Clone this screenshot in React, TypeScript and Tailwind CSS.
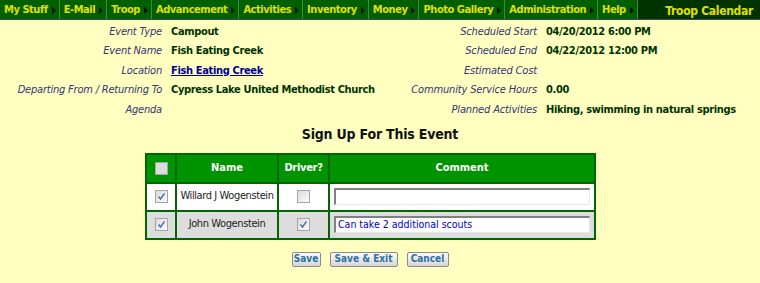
const menu = [
  'My Stuff',
  'E-Mail',
  'Troop',
  'Advancement',
  'Activities',
  'Inventory',
  'Money',
  'Photo Gallery',
  'Administration',
  'Help',
];

const leftRows: [string, string, boolean?][] = [
  ['Event Type', 'Campout'],
  ['Event Name', 'Fish Eating Creek'],
  ['Location', 'Fish Eating Creek', true],
  ['Departing From / Returning To', 'Cypress Lake United Methodist Church'],
  ['Agenda', ''],
];

const rightRows: [string, string][] = [
  ['Scheduled Start', '04/20/2012 6:00 PM'],
  ['Scheduled End', '04/22/2012 12:00 PM'],
  ['Estimated Cost', ''],
  ['Community Service Hours', '0.00'],
  ['Planned Activities', 'Hiking, swimming in natural springs'],
];

function Check({ checked, disabled }: { checked?: boolean; disabled?: boolean }) {
  return (
    <span
      className={`inline-flex w-[13px] h-[13px] items-center justify-center border border-[#a5a5a5] ${
        disabled ? 'bg-[#dcdcdc]' : 'bg-gradient-to-br from-[#dcdcdc] to-[#fbfbfb]'
      }`}
    >
      {checked && (
        <svg width="9" height="9" viewBox="0 0 9 9">
          <path d="M1.5 4.5 L3.5 7 L7.5 1.5" fill="none" stroke="#4a6ea8" strokeWidth="1.4" />
        </svg>
      )}
    </span>
  );
}

function Btn({ label, w }: { label: string; w: string }) {
  return (
    <button
      className={`${w} h-[15px] rounded-[2px] border border-[#8a8a8a] bg-gradient-to-b from-[#fafafa] to-[#d6d6d6] text-[10px] font-bold text-[#2f6fa3] leading-none whitespace-nowrap`}
    >
      {label}
    </button>
  );
}

export default function App() {
  return (
    <div className="w-[760px] h-[283px] bg-[#ffffc0] font-['DejaVu_Sans_Condensed','DejaVu_Sans',sans-serif] text-[11px] overflow-hidden">
      {/* top menu */}
      <div className="flex h-[20px] bg-[#003300] border-b border-[#3a4a5a]">
        <div className="flex bg-[#006000]">
          {menu.map((m) => (
            <div
              key={m}
              className="flex items-center gap-[4px] pl-[4px] pr-[3px] pt-[2px] border-r border-[#3c8a3c] text-[#e0e000] font-bold whitespace-nowrap tracking-[-0.45px]"
            >
              <span>{m}</span>
              <svg width="4" height="7" viewBox="0 0 4 7">
                <path d="M0 0 L4 3.5 L0 7 Z" fill="#111" />
              </svg>
            </div>
          ))}
        </div>
        <div className="flex-1 flex items-center justify-end pr-[7px] pt-[3px] text-[#e0e000] font-bold text-[12px] whitespace-nowrap tracking-[-0.3px]">
          Troop Calendar
        </div>
      </div>

      {/* event details */}
      <div className="flex pt-[2px]">
        <div className="grid grid-cols-[162px_1fr] gap-x-[9px] w-[400px]">
          {leftRows.map(([l, v, link]) => (
            <div key={l} className="contents">
              <div className="h-[19.5px] flex items-center justify-end italic text-[#333377] whitespace-nowrap tracking-[-0.2px]">{l}</div>
              <div
                className={`h-[19.5px] flex items-center font-bold whitespace-nowrap tracking-[-0.35px] ${
                  link ? 'text-[#000099] underline' : 'text-[#003300]'
                }`}
              >
                {v}
              </div>
            </div>
          ))}
        </div>
        <div className="grid grid-cols-[137px_1fr] gap-x-[9px] flex-1">
          {rightRows.map(([l, v]) => (
            <div key={l} className="contents">
              <div className="h-[19.5px] flex items-center justify-end italic text-[#333377] whitespace-nowrap tracking-[-0.15px]">{l}</div>
              <div className="h-[19.5px] flex items-center font-bold text-[#003300] whitespace-nowrap tracking-[-0.35px]">{v}</div>
            </div>
          ))}
        </div>
      </div>

      <div className="text-center font-bold text-[14px] text-[#111] mt-[4px] tracking-[-0.2px]">Sign Up For This Event</div>

      {/* sign up table */}
      <div className="flex justify-center mt-[8px] pr-[19px]">
        <table className="border-collapse border-2 border-[#006600] w-[451px] table-fixed">
          <thead>
            <tr className="bg-[#009300] text-white font-bold h-[29px]">
              <th className="border-2 border-[#006600] w-[30px]">
                <div className="flex justify-center">
                  <Check disabled />
                </div>
              </th>
              <th className="border-2 border-[#006600] w-[102px]">Name</th>
              <th className="border-2 border-[#006600] w-[51px] tracking-[-0.3px]">Driver?</th>
              <th className="border-2 border-[#006600]">Comment</th>
            </tr>
          </thead>
          <tbody>
            {[
              { name: 'Willard J Wogenstein', driver: false, comment: '', bg: 'bg-white' },
              { name: 'John Wogenstein', driver: true, comment: 'Can take 2 additional scouts', bg: 'bg-[#dddddd]' },
            ].map((r) => (
              <tr key={r.name} className={`${r.bg} h-[28px]`}>
                <td className="border-2 border-[#006600]">
                  <div className="flex justify-center">
                    <Check checked />
                  </div>
                </td>
                <td className="border-2 border-[#006600] text-center text-[#222] whitespace-nowrap tracking-[-0.4px]">{r.name}</td>
                <td className="border-2 border-[#006600]">
                  <div className="flex justify-center">
                    <Check checked={r.driver} />
                  </div>
                </td>
                <td className="border-2 border-[#006600] px-[4px]">
                  <div className="h-[17px] bg-white border-t-2 border-l-2 border-[#808080] border-b border-r border-b-[#e6e6e6] border-r-[#e6e6e6] flex items-center px-[2px] text-[#0000cc] text-[10.5px]">
                    {r.comment}
                  </div>
                </td>
              </tr>
            ))}
          </tbody>
        </table>
      </div>

      {/* buttons */}
      <div className="flex justify-center gap-[9px] mt-[12px] pr-[20px]">
        <Btn label="Save" w="w-[29px]" />
        <Btn label="Save & Exit" w="w-[68px]" />
        <Btn label="Cancel" w="w-[42px]" />
      </div>
    </div>
  );
}
